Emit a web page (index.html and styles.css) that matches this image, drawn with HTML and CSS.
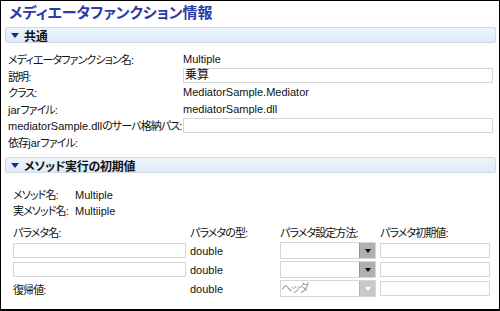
FILE: index.html
```html
<!DOCTYPE html>
<html>
<head>
  <title>メディエータファンクション情報</title>
  <meta charset=utf-8>
  <meta name=viewport content="width=device-width, initial-scale=1">
  <link rel="stylesheet" href="styles.css">
</head>
<body>
<div class="frame">
  <h1 class="title">メディエータファンクション情報</h1>

  <div class="sectionHead"><span class="tri"></span>共通</div>
  <div class="common">
    <div class="lbl">メディエータファンクション名:</div><div class="en">Multiple</div>
    <div class="lbl">説明:</div><div><div class="box big">乗算</div></div>
    <div class="lbl">クラス:</div><div class="en">MediatorSample.Mediator</div>
    <div class="lbl"><span class="en">jar</span>ファイル:</div><div class="en">mediatorSample.dll</div>
    <div class="lbl"><span class="en">mediatorSample.dll</span>のサーバ格納パス:</div><div><div class="box"></div></div>
    <div class="lbl">依存<span class="en">jar</span>ファイル:</div><div></div>
  </div>

  <div class="sectionHead"><span class="tri"></span>メソッド実行の初期値</div>
  <div class="method">
    <div class="mrow"><span class="mlbl">メソッド名:</span><span class="en">Multiple</span></div>
    <div class="mrow"><span class="mlbl">実メソッド名:</span><span class="en">Multiiple</span></div>
  </div>
  <div class="params">
    <div>パラメタ名:</div><div>パラメタの型:</div><div>パラメタ設定方法:</div><div>パラメタ初期値:</div>

    <div class="box"></div><div class="en">double</div>
    <div class="sel"><span class="selText"></span><span class="selBtn"><i></i></span></div><div class="box"></div>

    <div class="box"></div><div class="en">double</div>
    <div class="sel"><span class="selText"></span><span class="selBtn"><i></i></span></div><div class="box"></div>

    <div>復帰値:</div><div class="en">double</div>
    <div class="sel off"><span class="selText">ヘッダ</span><span class="selBtn"><i></i></span></div><div class="box"></div>
  </div>
</div>
</body>
</html>
```

FILE: styles.css
```css
html, body {
  margin: 0;
  padding: 0;
  background: #fff;
}
.frame {
  width: 500px;
  height: 311px;
  box-sizing: border-box;
  border: 1px solid #000;
  border-bottom-width: 2px;
  font-family: "Liberation Sans", "Noto Sans CJK JP", sans-serif;
  font-size: 11px;
  color: #111;
  font-feature-settings: "palt";
  letter-spacing: -0.9px;
  white-space: nowrap;
  overflow: hidden;
}
.en {
  letter-spacing: 0;
}
.title {
  margin: 0;
  padding: 1px 0 0 8px;
  height: 25px;
  font-family: "Noto Sans CJK JP", sans-serif;
  font-size: 15px;
  line-height: 19px;
  font-weight: bold;
  color: #2e3aa6;
  letter-spacing: 0;
}
.sectionHead {
  display: flex;
  align-items: center;
  margin: 0 3px 0 4px;
  height: 14px;
  padding-left: 5px;
  border: 1px solid #d3d9e2;
  border-radius: 2px;
  background: linear-gradient(#edf4fd, #dfebf9);
  font-size: 12px;
  font-weight: bold;
  letter-spacing: -0.3px;
  color: #111;
}
.tri {
  width: 0;
  height: 0;
  border-left: 4px solid transparent;
  border-right: 4px solid transparent;
  border-top: 5px solid #1a2a8a;
  margin-right: 5px;
}
.common {
  display: grid;
  grid-template-columns: 175px 310px;
  grid-auto-rows: 16.5px;
  align-items: center;
  padding: 8px 0 7px 7px;
}
.box {
  height: 13px;
  border: 1px solid #d6d6d6;
  background: #fff;
}
.box.big {
  font-size: 12px;
  line-height: 13px;
  padding-left: 1px;
  letter-spacing: 0;
}
.method {
  padding: 14px 0 3px 12px;
}
.mrow {
  height: 16px;
  line-height: 16px;
}
.mlbl {
  display: inline-block;
  width: 62px;
}
.params {
  display: grid;
  grid-template-columns: 173px 86px 96px 110px;
  column-gap: 4px;
  grid-auto-rows: 19px;
  align-items: center;
  padding-left: 12px;
}
.sel {
  display: flex;
  height: 15px;
  border: 1px solid #d6d6d6;
  background: #fff;
}
.selText {
  flex: 1;
  line-height: 14px;
  color: #999;
}
.selBtn {
  display: flex;
  align-items: center;
  justify-content: center;
  width: 15px;
  background: #b0b0b0;
  border-left: 1px solid #939393;
}
.selBtn i {
  width: 0;
  height: 0;
  border-left: 3px solid transparent;
  border-right: 3px solid transparent;
  border-top: 4px solid #000;
}
.sel.off .selBtn {
  background: #c8c8c8;
  border-left-color: #b5b5b5;
}
.sel.off .selBtn i {
  border-top-color: #fff;
}
```
